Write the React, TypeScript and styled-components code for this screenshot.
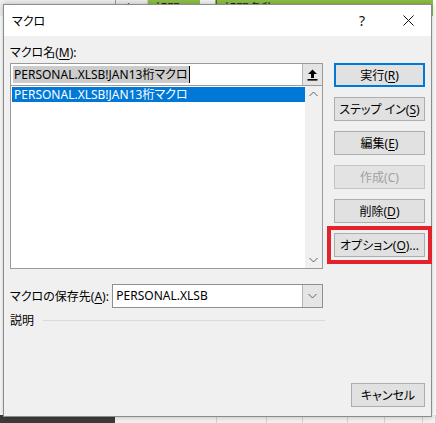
import React from "react";
import styled, { createGlobalStyle, css } from "styled-components";

const GlobalStyle = createGlobalStyle`
  html, body {
    margin: 0;
    padding: 0;
  }
  body {
    width: 436px;
    height: 423px;
    overflow: hidden;
    background: #ffffff;
    font-family: "Noto Sans", "Noto Sans CJK JP", sans-serif;
    font-size: 12px;
    font-feature-settings: "palt";
    color: #000000;
  }
`;

/* --- spreadsheet behind the dialog --- */

const Sheet = styled.div`
  position: relative;
  width: 436px;
  height: 423px;
  display: flex;
  flex-direction: column;
  justify-content: space-between;
  background: #ffffff;
`;

const SheetRow = styled.div<{ $height: number }>`
  display: flex;
  height: ${(p) => p.$height}px;
`;

const SheetCell = styled.div<{ $w: number; $bg?: string; $line?: string }>`
  width: ${(p) => p.$w}px;
  flex-shrink: 0;
  box-sizing: border-box;
  background: ${(p) => p.$bg || "#f3f3f3"};
  border-right: 1px solid ${(p) => p.$line || "#d4d4d4"};
  font-family: "Noto Sans CJK JP", sans-serif;
  font-size: 13px;
  line-height: 16px;
  padding: 0 0 0 6px;
  white-space: nowrap;
  color: #1d1d1d;
`;

const FilterBox = styled.span`
  display: inline-block;
  width: 15px;
  height: 12px;
  margin-left: 8px;
  background: #f4f4f4;
  vertical-align: top;
`;

/* --- dialog --- */

const Dialog = styled.div`
  position: absolute;
  left: 3px;
  top: 4px;
  width: 429px;
  height: 413px;
  box-sizing: border-box;
  border: 1px solid #8c8c8c;
  background: #f0f0f0;
  display: flex;
  flex-direction: column;
  box-shadow: 0 0 6px rgba(0, 0, 0, 0.25);
`;

const TitleBar = styled.div`
  height: 31px;
  flex-shrink: 0;
  background: #ffffff;
  display: flex;
  align-items: center;
  padding-left: 8px;
`;

const Title = styled.div`
  flex: 1;
  font-size: 12px;
`;

const CaptionButton = styled.div`
  width: 46px;
  height: 31px;
  display: flex;
  align-items: center;
  justify-content: center;
  font-size: 14px;
  color: #111;
`;

const Body = styled.div`
  flex: 1;
  display: flex;
  gap: 11px;
  padding: 9px 6px 9px 6px;
`;

const LeftCol = styled.div`
  width: 313px;
  display: flex;
  flex-direction: column;
`;

const FieldLabel = styled.div`
  height: 16px;
  line-height: 16px;
  white-space: nowrap;
`;

const Key = styled.span`
  text-decoration: underline;
  text-underline-offset: 2px;
`;

const NameInput = styled.div`
  margin-top: 2px;
  height: 23px;
  box-sizing: border-box;
  border: 1px solid #9a9a9a;
  background: #ffffff;
  display: flex;
  align-items: center;
`;

const InputText = styled.div`
  flex: 1;
  display: flex;
  align-items: center;
  padding-left: 2px;
  white-space: nowrap;
`;

const Selection = styled.span`
  background: #cccccc;
  line-height: 17px;
  padding: 0 1px;
`;

const Caret = styled.span`
  width: 1px;
  height: 17px;
  background: #000;
`;

const UpButton = styled.div`
  width: 20px;
  height: 21px;
  box-sizing: border-box;
  border-left: 1px solid #b4b4b4;
  background: #e4e4e4;
  display: flex;
  align-items: center;
  justify-content: center;
`;

const ListBox = styled.div`
  height: 183px;
  box-sizing: border-box;
  border: 1px solid #9a9a9a;
  border-top: none;
  background: #ffffff;
  display: flex;
`;

const ListItems = styled.div`
  flex: 1;
  padding: 1px 0 0 1px;
`;

const ListItem = styled.div<{ $selected?: boolean }>`
  height: 15px;
  line-height: 15px;
  padding-left: 2px;
  white-space: nowrap;
  background: ${(p) => (p.$selected ? "#0078d7" : "transparent")};
  color: ${(p) => (p.$selected ? "#ffffff" : "#000000")};
`;

const ScrollBar = styled.div`
  width: 17px;
  background: #f0f0f0;
  display: flex;
  flex-direction: column;
  justify-content: space-between;
  align-items: center;
  padding: 5px 0;
`;

const SaveRow = styled.div`
  margin-top: 15px;
  height: 24px;
  display: flex;
  align-items: center;
`;

const SaveLabel = styled.div`
  width: 103px;
  white-space: nowrap;
`;

const Combo = styled.div`
  width: 212px;
  height: 24px;
  box-sizing: border-box;
  border: 1px solid #8f8f8f;
  background: #ffffff;
  display: flex;
`;

const ComboText = styled.div`
  flex: 1;
  padding-left: 3px;
  line-height: 22px;
`;

const ComboButton = styled.div`
  width: 19px;
  border-left: 1px solid #b4b4b4;
  background: #e5e5e5;
  display: flex;
  align-items: center;
  justify-content: center;
`;

const DescRow = styled.div`
  margin-top: 4px;
  height: 16px;
  display: flex;
  align-items: center;
  gap: 9px;
  width: 315px;
`;

const Rule = styled.div`
  flex: 1;
  height: 1px;
  background: #dadada;
`;

const RightCol = styled.div`
  width: 91px;
  display: flex;
  flex-direction: column;
  align-items: flex-end;
  gap: 10px;
  padding-top: 18px;
`;

const Button = styled.div<{
  $default?: boolean;
  $disabled?: boolean;
  $marked?: boolean;
  $w?: number;
}>`
  width: ${(p) => p.$w || 91}px;
  height: 24px;
  box-sizing: border-box;
  background: #e1e1e1;
  border: 1px solid #adadad;
  display: flex;
  align-items: center;
  justify-content: center;
  white-space: nowrap;
  font-size: 12px;
  ${(p) =>
    p.$default &&
    css`
      border: 2px solid #0078d7;
    `}
  ${(p) =>
    p.$disabled &&
    css`
      border-color: #c4c4c4;
      color: #a0a0a0;
      background: #e3e3e3;
    `}
  ${(p) =>
    p.$marked &&
    css`
      outline: 4px solid #e3222c;
      outline-offset: 3px;
    `}
`;

const CancelButton = styled(Button)`
  margin-top: auto;
`;

const Chevron = ({ up }: { up?: boolean }) => (
  <svg width="9" height="6" viewBox="0 0 9 6">
    <path
      d={up ? "M0.5 5L4.5 1L8.5 5" : "M0.5 1L4.5 5L8.5 1"}
      fill="none"
      stroke="#606060"
      strokeWidth="1"
    />
  </svg>
);

export default function App() {
  const macro = "PERSONAL.XLSB!JAN13桁マクロ";
  return (
    <>
      <GlobalStyle />
      <Sheet>
        <SheetRow $height={16}>
          <SheetCell $w={116} $bg="#f0f0f0" $line="#9c9c9c" />
          <SheetCell $w={32} $bg="#eeeeee" $line="#d0d0d0">
            ↓
          </SheetCell>
          <SheetCell $w={69} $bg="#8dbf46" $line="#4f6b28">
            部門コ
            <FilterBox />
          </SheetCell>
          <SheetCell $w={216} $bg="#8dbf46" $line="#8dbf46">
            部門名称
          </SheetCell>
          <SheetCell $w={3} $bg="#ffffff" $line="#ffffff" />
        </SheetRow>
        <SheetRow $height={8}>
          <SheetCell $w={115} $bg="#3b3b3b" $line="#3b3b3b" />
          <SheetCell $w={102} />
          <SheetCell $w={50} />
          <SheetCell $w={36} />
          <SheetCell $w={45} />
          <SheetCell $w={37} />
          <SheetCell $w={38} />
          <SheetCell $w={13} />
        </SheetRow>

        <Dialog>
          <TitleBar>
            <Title>マクロ</Title>
            <CaptionButton>?</CaptionButton>
            <CaptionButton>
              <svg width="11" height="11" viewBox="0 0 11 11">
                <path d="M0.5 0.5L10.5 10.5M10.5 0.5L0.5 10.5" stroke="#111" strokeWidth="1" />
              </svg>
            </CaptionButton>
          </TitleBar>

          <Body>
            <LeftCol>
              <FieldLabel>
                マクロ名(<Key>M</Key>):
              </FieldLabel>
              <NameInput>
                <InputText>
                  <Selection>{macro}</Selection>
                  <Caret />
                </InputText>
                <UpButton>
                  <svg width="11" height="12" viewBox="0 0 11 12">
                    <path d="M5.5 0.5L10 5H7V9H4V5H1Z" fill="#000" />
                    <rect x="0.5" y="10" width="10" height="1.6" fill="#000" />
                  </svg>
                </UpButton>
              </NameInput>
              <ListBox>
                <ListItems>
                  <ListItem $selected>{macro}</ListItem>
                </ListItems>
                <ScrollBar>
                  <Chevron up />
                  <Chevron />
                </ScrollBar>
              </ListBox>

              <SaveRow>
                <SaveLabel>
                  マクロの保存先(<Key>A</Key>):
                </SaveLabel>
                <Combo>
                  <ComboText>PERSONAL.XLSB</ComboText>
                  <ComboButton>
                    <Chevron />
                  </ComboButton>
                </Combo>
              </SaveRow>
              <DescRow>
                <span>説明</span>
                <Rule />
              </DescRow>
            </LeftCol>

            <RightCol>
              <Button $default>
                実行(<Key>R</Key>)
              </Button>
              <Button>
                ステップ イン(<Key>S</Key>)
              </Button>
              <Button>
                編集(<Key>E</Key>)
              </Button>
              <Button $disabled>作成(C)</Button>
              <Button>
                削除(<Key>D</Key>)
              </Button>
              <Button $marked>
                オプション(<Key>O</Key>)...
              </Button>
              <CancelButton $w={74}>キャンセル</CancelButton>
            </RightCol>
          </Body>
        </Dialog>
      </Sheet>
    </>
  );
}
